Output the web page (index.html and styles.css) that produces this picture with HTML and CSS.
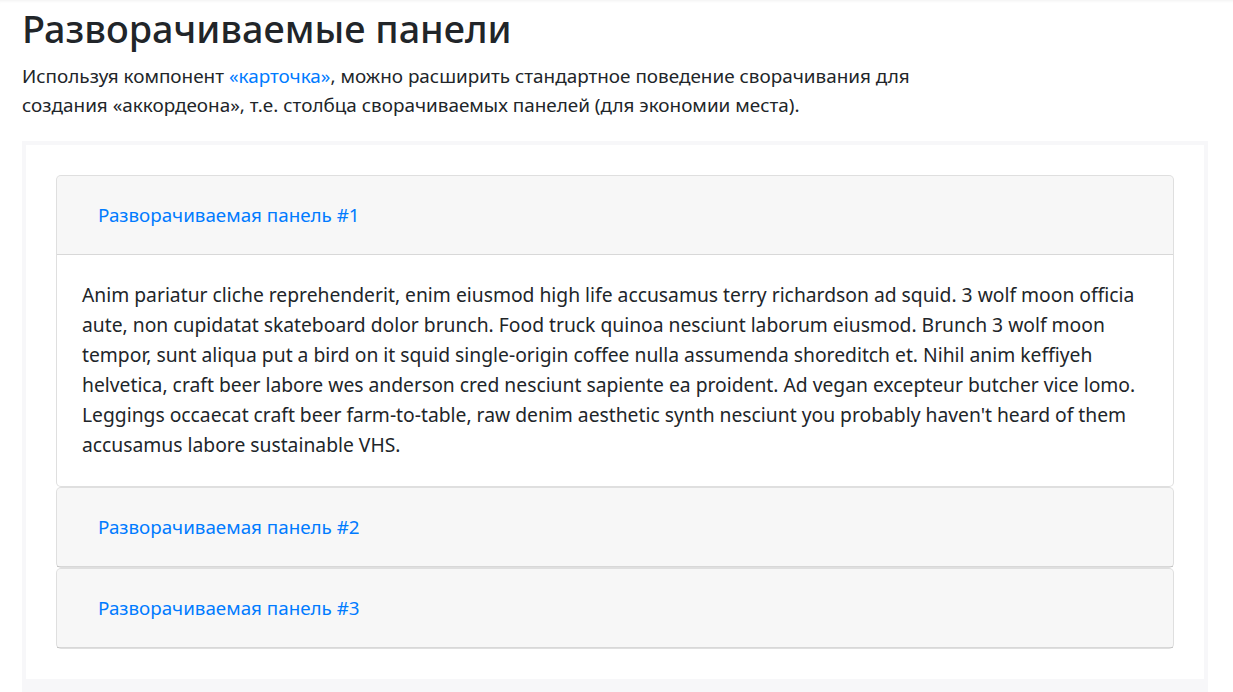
FILE: index.html
```html
<!DOCTYPE html>
<html lang="ru">
<head>
    <meta charset="UTF-8">
    <meta name="viewport" content="width=device-width, initial-scale=1.0">
    <title>Разворачиваемые панели</title>
    <link rel="stylesheet" href="styles.css">
</head>
<body>

    <div class="content">
        <h1 class="title">Разворачиваемые панели</h1>
        <p class="lead">Используя компонент <a href="#">«карточка»</a>, можно расширить стандартное поведение сворачивания для создания «аккордеона», т.е. столбца сворачиваемых панелей (для экономии места).</p>

        <div class="example">
            <div class="accordion" id="accordion">
                <div class="card">
                    <div class="card-header">
                        <button class="btn-link" type="button">Разворачиваемая панель #1</button>
                    </div>
                    <div class="card-body">
                        Anim pariatur cliche reprehenderit, enim eiusmod high life accusamus terry richardson ad squid. 3 wolf moon officia aute, non cupidatat skateboard dolor brunch. Food truck quinoa nesciunt laborum eiusmod. Brunch 3 wolf moon tempor, sunt aliqua put a bird on it squid single-origin coffee nulla assumenda shoreditch et. Nihil anim keffiyeh helvetica, craft beer labore wes anderson cred nesciunt sapiente ea proident. Ad vegan excepteur butcher vice lomo. Leggings occaecat craft beer farm-to-table, raw denim aesthetic synth nesciunt you probably haven't heard of them accusamus labore sustainable VHS.
                    </div>
                </div>
                <div class="card">
                    <div class="card-header">
                        <button class="btn-link" type="button">Разворачиваемая панель #2</button>
                    </div>
                </div>
                <div class="card">
                    <div class="card-header">
                        <button class="btn-link" type="button">Разворачиваемая панель #3</button>
                    </div>
                </div>
            </div>
        </div>
    </div>

</body>
</html>
```

FILE: styles.css
```css
body {
    font-family: "Noto Sans", "Open Sans", sans-serif;
    color: #212529;
    background-color: #fff;
    margin: 0;
    font-size: 20px;
    line-height: 1.5;
}
.content {
    padding: 5px 25px 0 22px;
    box-shadow: inset 0 3px 3px -2px rgba(0, 0, 0, 0.06);
}
.title {
    font-size: 37.8px;
    font-weight: 500;
    line-height: 48px;
    margin: 0 0 9px;
}
.lead {
    font-size: 18.9px;
    line-height: 29px;
    max-width: 80%;
    margin: 0 0 21px;
}
a {
    color: #007bff;
    text-decoration: none;
}
.example {
    border: 4px solid #f7f7f9;
    border-bottom-width: 20px;
    padding: 30px;
}
.card {
    background-color: #fff;
    border: 1px solid rgba(0, 0, 0, 0.125);
    border-radius: 5px;
}
.card-header {
    display: flex;
    align-items: center;
    background-color: rgba(0, 0, 0, 0.03);
    border-bottom: 1px solid rgba(0, 0, 0, 0.125);
    padding: 15px 25px;
    border-radius: 4px 4px 0 0;
}
.btn-link {
    font-family: inherit;
    font-size: 18.8px;
    line-height: 30px;
    color: #007bff;
    background: none;
    border: 1px solid transparent;
    padding: 8px 15px;
    cursor: pointer;
}
.card-body {
    padding: 25px 25px 26px;
    font-size: 19.3px;
    line-height: 30px;
}
```
